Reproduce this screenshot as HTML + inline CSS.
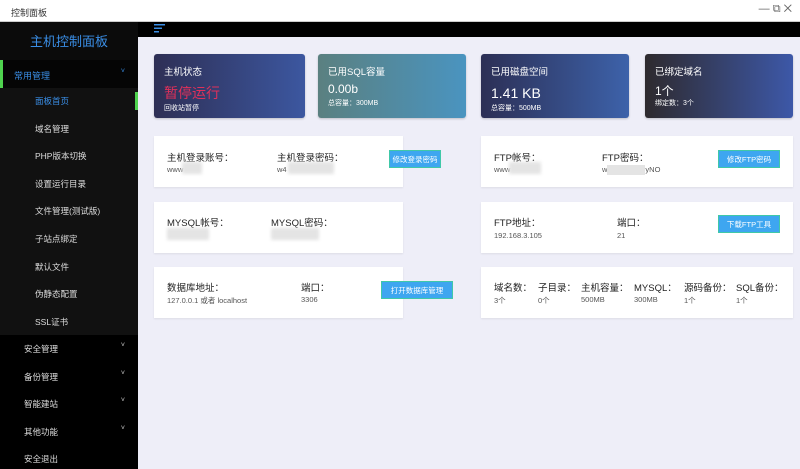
<!DOCTYPE html>
<html><head><meta charset="utf-8"><style>
*{margin:0;padding:0;box-sizing:border-box}
body{width:800px;height:469px;overflow:hidden;background:#eeeef8;font-family:"Liberation Sans","Noto Sans CJK SC",sans-serif;position:relative}
.a{position:absolute}
.tb{left:0;top:0;width:800px;height:22px;background:#fff;border-bottom:1px solid #ccc;font-size:9px;color:#333;padding:6px 0 0 11px}
.side{left:0;top:22px;width:138px;height:447px;background:#000}
.mi{position:absolute;left:0;width:138px;font-size:8.5px;color:#ddd}
.chev{position:absolute;right:13px;font-size:7px;color:#ccc}
.card{border-radius:3px;color:#fff;box-shadow:0 1px 2px rgba(0,0,0,.2)}
.card .t{position:absolute;left:10px;top:10px;font-size:9.5px}
.card .v{position:absolute;left:10px;top:31px;font-size:14px}
.card .s{position:absolute;left:10px;top:49px;font-size:7px}
.box{background:#fff;box-shadow:0 1px 2px rgba(0,0,0,.08)}
.lb{position:absolute;font-size:9.5px;color:#222}
.vl{position:absolute;font-size:7.5px;color:#555}
.btn{position:absolute;background:#3ea6f0;color:#fff;font-size:7.5px;text-align:center;line-height:18px;height:18px;border:1px solid #40c8a8}
.blur{position:absolute;background:#e4e4e4;filter:blur(1.5px)}
</style></head><body>
<div class="a tb">控制面板<span style="position:absolute;right:8px;top:3px;font-size:11px;color:#666">— ⧉ ✕</span></div>
<div class="a side">
 <div style="position:absolute;left:0;top:0;width:138px;height:38px;background:#0b0b0b;color:#3a8ee6;font-size:13px;text-align:center;line-height:40px">主机控制面板</div>
 <div style="position:absolute;left:0;top:38px;width:138px;height:28px;background:#050505"></div>
 <div style="position:absolute;left:0;top:38px;width:3px;height:28px;background:#4fd34f"></div>
 <div class="mi" style="top:47px;left:14px;color:#3a8ee6;font-size:9px">常用管理</div>
 <div class="chev" style="top:46px;color:#3a8ee6">˅</div>
 <div style="position:absolute;left:0;top:66px;width:138px;height:247px;background:#111"></div>
 <div style="position:absolute;left:135px;top:70px;width:3px;height:18px;background:#4fd34f"></div>
 <div class="mi" style="top:73px;left:35px;color:#3a8ee6">面板首页</div>
 <div class="mi" style="top:101px;left:35px">域名管理</div>
 <div class="mi" style="top:128px;left:35px">PHP版本切换</div>
 <div class="mi" style="top:156px;left:35px">设置运行目录</div>
 <div class="mi" style="top:183px;left:35px">文件管理(测试版)</div>
 <div class="mi" style="top:211px;left:35px">子站点绑定</div>
 <div class="mi" style="top:239px;left:35px">默认文件</div>
 <div class="mi" style="top:266px;left:35px">伪静态配置</div>
 <div class="mi" style="top:294px;left:35px">SSL证书</div>
 <div class="mi" style="top:321px;left:24px">安全管理</div><div class="chev" style="top:320px">˅</div>
 <div class="mi" style="top:349px;left:24px">备份管理</div><div class="chev" style="top:348px">˅</div>
 <div class="mi" style="top:376px;left:24px">智能建站</div><div class="chev" style="top:375px">˅</div>
 <div class="mi" style="top:404px;left:24px">其他功能</div><div class="chev" style="top:403px">˅</div>
 <div class="mi" style="top:431px;left:24px">安全退出</div>
</div>
<div class="a" style="left:138px;top:22px;width:662px;height:15px;background:#000"></div>
<svg class="a" style="left:154px;top:24px" width="12" height="9"><rect x="0" y="0" width="11" height="1.5" fill="#3a8ee6"/><rect x="0" y="3.5" width="8" height="1.5" fill="#3a8ee6"/><rect x="0" y="7" width="5" height="1.5" fill="#3a8ee6"/></svg>

<div class="a card" style="left:154px;top:54px;width:151px;height:64px;background:linear-gradient(90deg,#2e2f55,#3c57a0)"><div class="t">主机状态</div><div class="v" style="color:#e0305a;font-size:14px;top:29px">暂停运行</div><div class="s">回收站暂停</div></div>
<div class="a card" style="left:318px;top:54px;width:148px;height:64px;background:linear-gradient(90deg,#5a8080,#4a94c0)"><div class="t">已用SQL容量</div><div class="v" style="top:28px;font-size:12px">0.00b</div><div class="s" style="top:44px">总容量：300MB</div></div>
<div class="a card" style="left:481px;top:54px;width:148px;height:64px;background:linear-gradient(90deg,#2c2f55,#3d62aa)"><div class="t">已用磁盘空间</div><div class="v">1.41 KB</div><div class="s">总容量：500MB</div></div>
<div class="a card" style="left:645px;top:54px;width:148px;height:64px;background:linear-gradient(90deg,#2e2a2e,#3d58a8)"><div class="t">已绑定域名</div><div class="v" style="top:28px;font-size:12px">1个</div><div class="s" style="top:44px">绑定数：3个</div></div>

<div class="a box" style="left:154px;top:136px;width:249px;height:51px">
 <div class="lb" style="left:13px;top:14px">主机登录账号：</div><div class="vl" style="left:13px;top:29px">www</div><div class="blur" style="left:28px;top:26px;width:20px;height:12px"></div>
 <div class="lb" style="left:123px;top:14px">主机登录密码：</div><div class="vl" style="left:123px;top:29px">w4</div><div class="blur" style="left:134px;top:26px;width:46px;height:12px"></div>
 <div class="btn" style="left:235px;top:14px;width:52px">修改登录密码</div>
</div>
<div class="a box" style="left:481px;top:136px;width:312px;height:51px">
 <div class="lb" style="left:13px;top:14px">FTP帐号：</div><div class="vl" style="left:13px;top:29px">www</div><div class="blur" style="left:28px;top:26px;width:32px;height:12px"></div>
 <div class="lb" style="left:121px;top:14px">FTP密码：</div><div class="vl" style="left:121px;top:29px">w<span style="display:inline-block;width:38px;height:10px;background:#e4e4e4;vertical-align:middle"></span>yNO</div>
 <div class="btn" style="left:237px;top:14px;width:62px">修改FTP密码</div>
</div>
<div class="a box" style="left:154px;top:202px;width:249px;height:51px">
 <div class="lb" style="left:13px;top:13px">MYSQL帐号：</div><div class="blur" style="left:13px;top:26px;width:42px;height:12px"></div>
 <div class="lb" style="left:117px;top:13px">MYSQL密码：</div><div class="blur" style="left:117px;top:26px;width:48px;height:12px"></div>
</div>
<div class="a box" style="left:481px;top:202px;width:312px;height:51px">
 <div class="lb" style="left:13px;top:13px">FTP地址：</div><div class="vl" style="left:13px;top:29px">192.168.3.105</div>
 <div class="lb" style="left:136px;top:13px">端口：</div><div class="vl" style="left:136px;top:29px">21</div>
 <div class="btn" style="left:237px;top:13px;width:62px">下载FTP工具</div>
</div>
<div class="a box" style="left:154px;top:267px;width:249px;height:51px">
 <div class="lb" style="left:13px;top:13px">数据库地址：</div><div class="vl" style="left:13px;top:28px">127.0.0.1 或者 localhost</div>
 <div class="lb" style="left:147px;top:13px">端口：</div><div class="vl" style="left:147px;top:28px">3306</div>
 <div class="btn" style="left:227px;top:14px;width:72px">打开数据库管理</div>
</div>
<div class="a box" style="left:481px;top:267px;width:312px;height:51px">
 <div class="lb" style="left:13px;top:13px">域名数：</div><div class="vl" style="left:13px;top:28px">3个</div>
 <div class="lb" style="left:57px;top:13px">子目录：</div><div class="vl" style="left:57px;top:28px">0个</div>
 <div class="lb" style="left:100px;top:13px">主机容量：</div><div class="vl" style="left:100px;top:28px">500MB</div>
 <div class="lb" style="left:153px;top:13px">MYSQL：</div><div class="vl" style="left:153px;top:28px">300MB</div>
 <div class="lb" style="left:203px;top:13px">源码备份：</div><div class="vl" style="left:203px;top:28px">1个</div>
 <div class="lb" style="left:255px;top:13px">SQL备份：</div><div class="vl" style="left:255px;top:28px">1个</div>
</div>
</body></html>
